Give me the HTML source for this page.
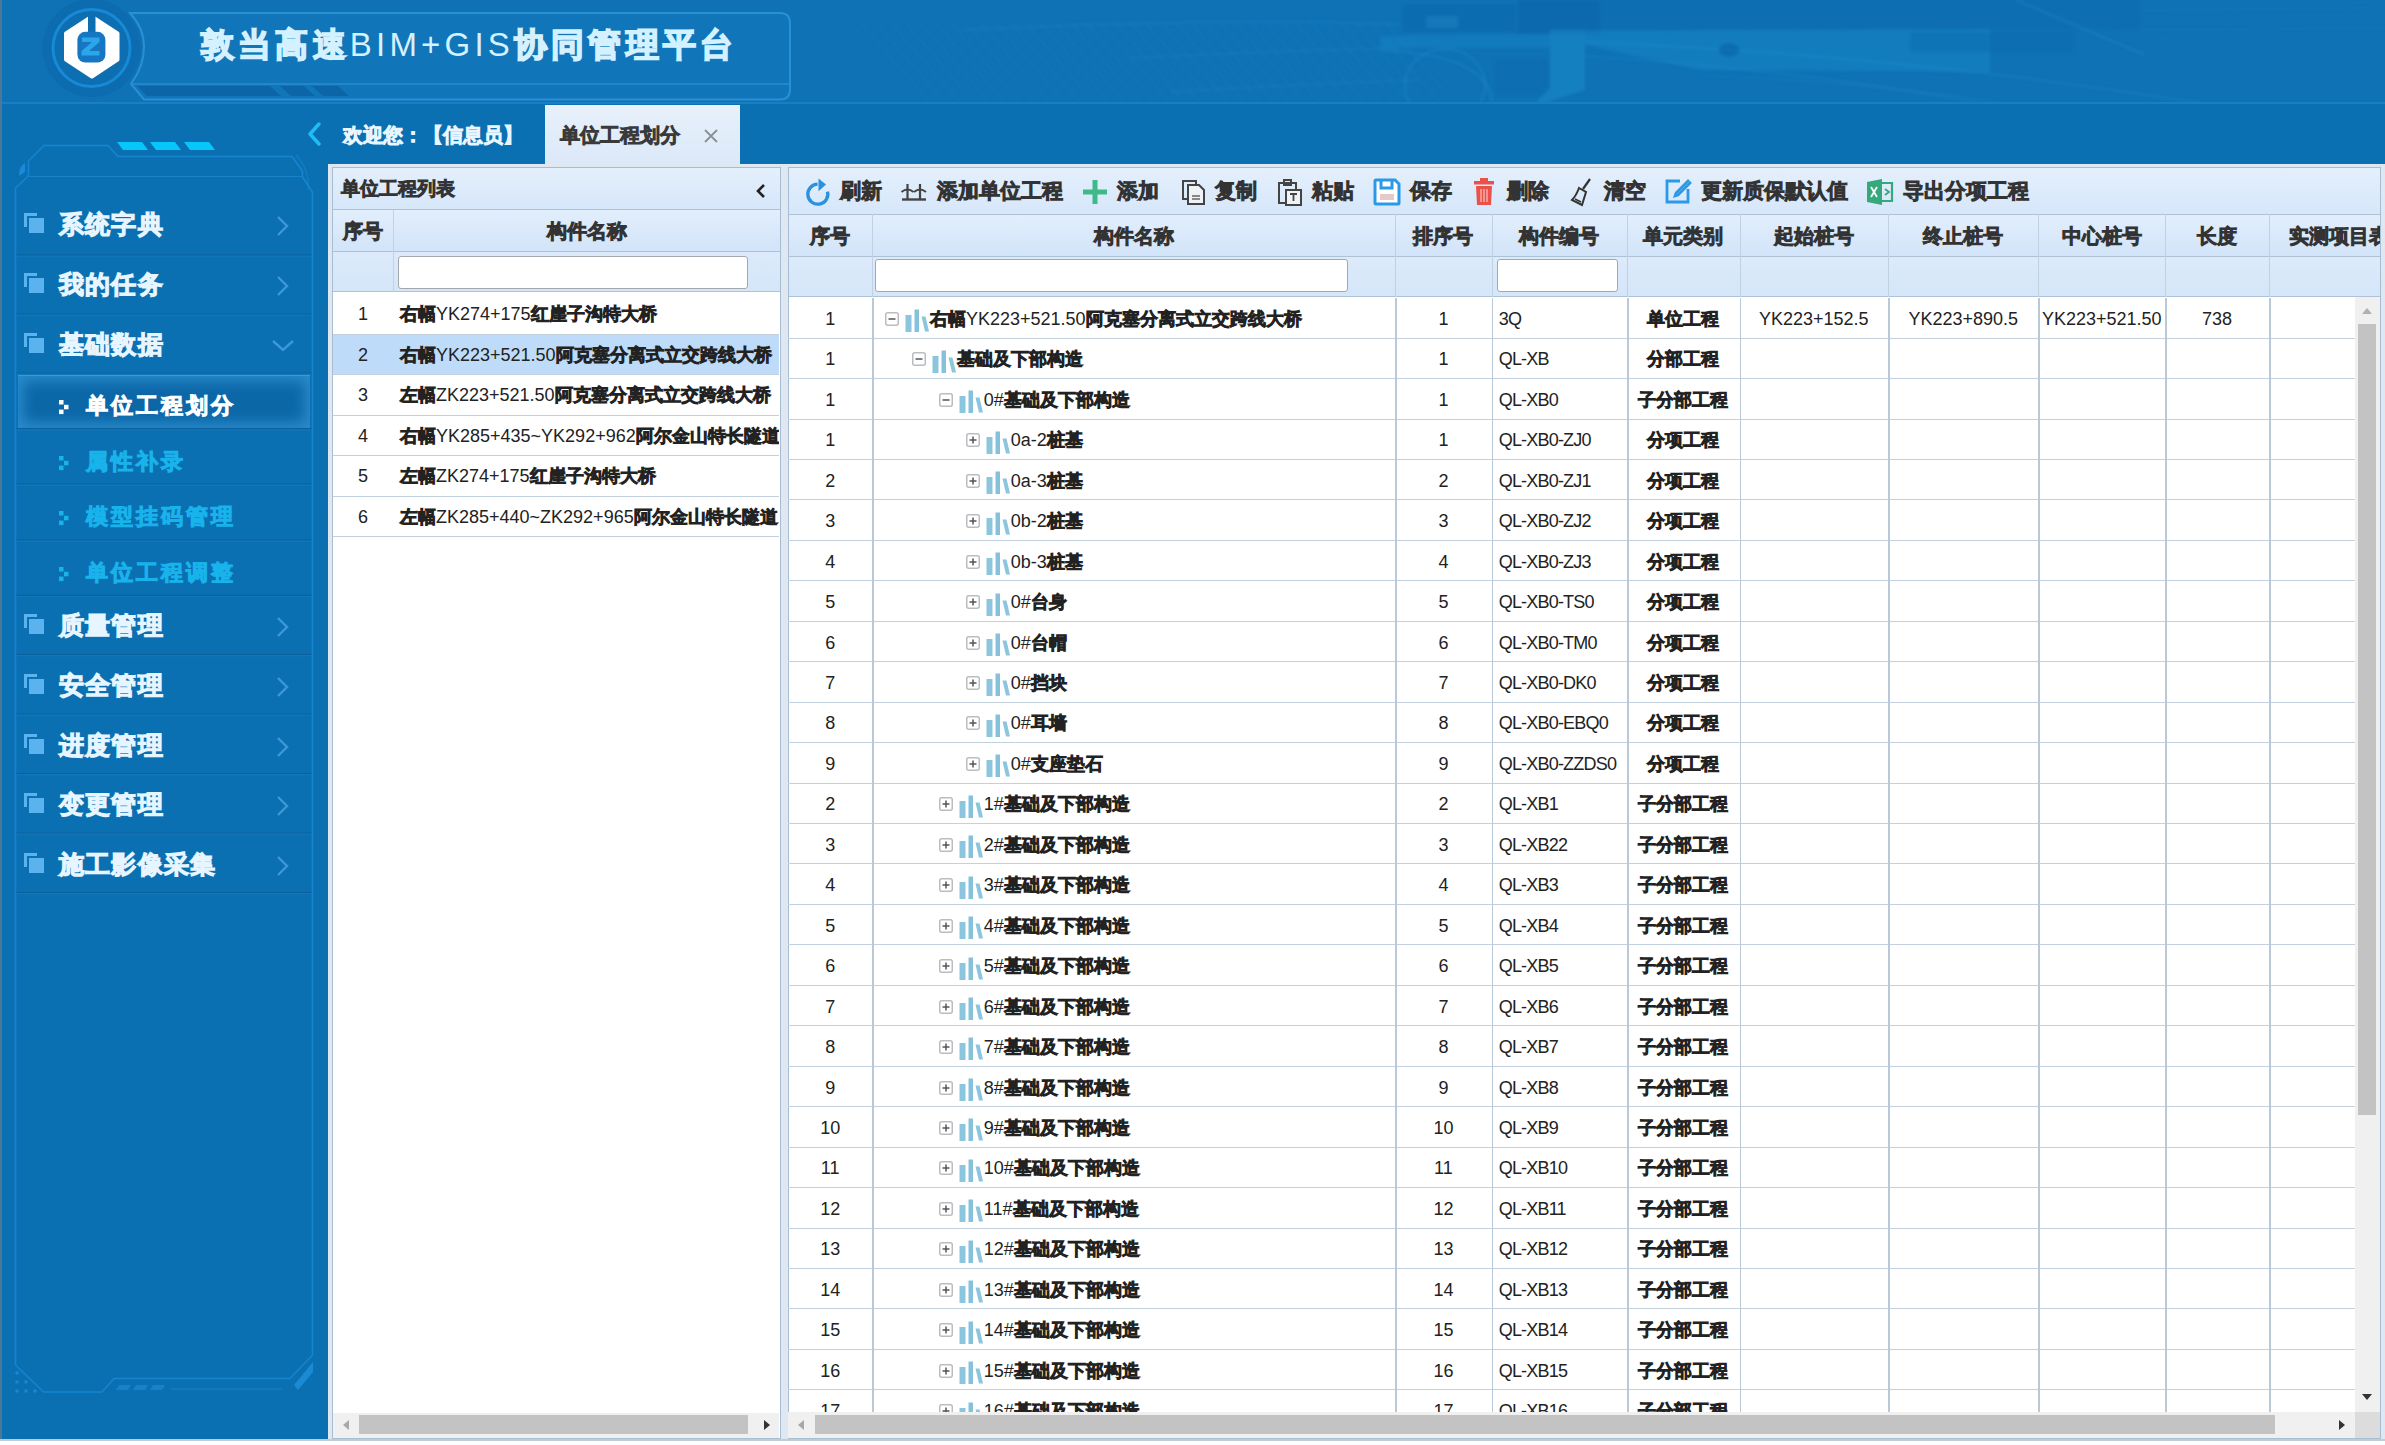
<!DOCTYPE html><html><head><meta charset="utf-8"><title>敦当高速BIM+GIS协同管理平台</title><style>
*{margin:0;padding:0;box-sizing:border-box}
html,body{width:2385px;height:1445px;overflow:hidden;background:#ffffff;font-family:"Liberation Sans", sans-serif}
.abs{position:absolute}
.t{position:absolute;white-space:nowrap;line-height:1}
.c{-webkit-text-stroke:.08em currentColor}
</style></head><body>
<div class="abs" style="left:0;top:0;width:2385px;height:1439px;background:#0b70b2"></div>
<div class="abs" style="left:0;top:0;width:2385px;height:103px;background:#0e72b5;overflow:hidden">
<svg class="abs" style="left:0;top:0;filter:blur(1.6px)" width="2385" height="103" viewBox="0 0 2385 103"><path d="M860 22 L930 103" stroke="#2c98d4" stroke-width="1.3" opacity="0.16"/><path d="M875 22 L945 103" stroke="#2c98d4" stroke-width="1.3" opacity="0.16"/><path d="M890 22 L960 103" stroke="#2c98d4" stroke-width="1.3" opacity="0.16"/><path d="M905 22 L975 103" stroke="#2c98d4" stroke-width="1.3" opacity="0.16"/><path d="M920 22 L990 103" stroke="#2c98d4" stroke-width="1.3" opacity="0.16"/><path d="M935 22 L1005 103" stroke="#2c98d4" stroke-width="1.3" opacity="0.16"/><path d="M950 22 L1020 103" stroke="#2c98d4" stroke-width="1.3" opacity="0.16"/><path d="M965 22 L1035 103" stroke="#2c98d4" stroke-width="1.3" opacity="0.16"/><path d="M980 22 L1050 103" stroke="#2c98d4" stroke-width="1.3" opacity="0.16"/><path d="M995 22 L1065 103" stroke="#2c98d4" stroke-width="1.3" opacity="0.16"/><path d="M1010 22 L1080 103" stroke="#2c98d4" stroke-width="1.3" opacity="0.16"/><path d="M1025 22 L1095 103" stroke="#2c98d4" stroke-width="1.3" opacity="0.16"/><path d="M1040 22 L1110 103" stroke="#2c98d4" stroke-width="1.3" opacity="0.16"/><path d="M1055 22 L1125 103" stroke="#2c98d4" stroke-width="1.3" opacity="0.16"/><path d="M1070 22 L1140 103" stroke="#2c98d4" stroke-width="1.3" opacity="0.16"/><path d="M1085 22 L1155 103" stroke="#2c98d4" stroke-width="1.3" opacity="0.16"/><path d="M1100 22 L1170 103" stroke="#2c98d4" stroke-width="1.3" opacity="0.16"/><path d="M1115 22 L1185 103" stroke="#2c98d4" stroke-width="1.3" opacity="0.16"/><path d="M1130 22 L1200 103" stroke="#2c98d4" stroke-width="1.3" opacity="0.16"/><path d="M1145 22 L1215 103" stroke="#2c98d4" stroke-width="1.3" opacity="0.16"/><path d="M1160 22 L1230 103" stroke="#2c98d4" stroke-width="1.3" opacity="0.16"/><path d="M1175 22 L1245 103" stroke="#2c98d4" stroke-width="1.3" opacity="0.16"/><path d="M1190 22 L1260 103" stroke="#2c98d4" stroke-width="1.3" opacity="0.16"/><path d="M1205 22 L1275 103" stroke="#2c98d4" stroke-width="1.3" opacity="0.16"/><path d="M1220 22 L1290 103" stroke="#2c98d4" stroke-width="1.3" opacity="0.16"/><path d="M1235 22 L1305 103" stroke="#2c98d4" stroke-width="1.3" opacity="0.16"/><path d="M1250 22 L1320 103" stroke="#2c98d4" stroke-width="1.3" opacity="0.16"/><path d="M1265 22 L1335 103" stroke="#2c98d4" stroke-width="1.3" opacity="0.16"/><path d="M1280 22 L1350 103" stroke="#2c98d4" stroke-width="1.3" opacity="0.16"/><path d="M1295 22 L1365 103" stroke="#2c98d4" stroke-width="1.3" opacity="0.16"/><path d="M1310 22 L1380 103" stroke="#2c98d4" stroke-width="1.3" opacity="0.16"/><path d="M1325 22 L1395 103" stroke="#2c98d4" stroke-width="1.3" opacity="0.16"/><path d="M1340 22 L1410 103" stroke="#2c98d4" stroke-width="1.3" opacity="0.16"/><path d="M1355 22 L1425 103" stroke="#2c98d4" stroke-width="1.3" opacity="0.16"/><path d="M1370 22 L1440 103" stroke="#2c98d4" stroke-width="1.3" opacity="0.16"/><path d="M1385 22 L1455 103" stroke="#2c98d4" stroke-width="1.3" opacity="0.16"/><path d="M960 30 Q1200 18 1400 24" stroke="#2a94d0" stroke-width="2" fill="none" opacity="0.22"/><path d="M1130 58 Q1300 50 1400 48" stroke="#2a94d0" stroke-width="1.5" fill="none" opacity="0.25"/><path d="M1170 92 Q1300 84 1420 80" stroke="#2a94d0" stroke-width="1.5" fill="none" opacity="0.25"/><path d="M1403 3 L1517 3 L1517 33 L1403 33 Z" fill="#0a62a6" opacity="0.35"/><path d="M1403 3 L1517 3 M1403 33 L1517 33 M1517 0 L1517 33" stroke="#2a94d0" stroke-width="1.2" opacity="0.3"/><rect x="1426" y="16" width="32" height="12" fill="#2a94d0" opacity="0.3"/><path d="M1517 0 L1600 0 L1600 34 L1517 34 Z" fill="#0a60a4" opacity="0.45"/><path d="M1600 0 L2140 0 L2140 28 L1600 32 Z" fill="#0a64a8" opacity="0.25"/><path d="M1380 36 L1550 34 L1550 48 L1380 48 Z" fill="#1a8cca" opacity="0.35"/><ellipse cx="1445" cy="85" rx="40" ry="36" fill="none" stroke="#2a98d4" stroke-width="2" opacity="0.3"/><path d="M1380 50 Q1490 55 1492 103" stroke="#2a98d4" stroke-width="2" fill="none" opacity="0.3"/><path d="M1495 60 L1548 60 L1548 95 L1495 95 Z" fill="#0a62a6" opacity="0.2"/><path d="M1550 30 L1585 30 L1585 90 L1545 103 L1535 103 L1550 88 Z" fill="#1c8ecc" opacity="0.5"/><path d="M1585 30 L1990 29 L1990 72 L1700 70 L1585 45 Z" fill="#1a8dcb" opacity="0.4"/><path d="M1910 32 L2073 32 L2073 52 L1910 52 Z" fill="#0b67aa" opacity="0.35"/><path d="M2016 0 L2145 55" stroke="#2a98d4" stroke-width="2" opacity="0.3"/><path d="M1585 42 Q1900 55 2200 103" stroke="#2a98d4" stroke-width="1.8" fill="none" opacity="0.3"/><path d="M1585 56 Q1800 70 1980 103" stroke="#2a98d4" stroke-width="1.5" fill="none" opacity="0.28"/><path d="M1700 75 Q1900 85 2000 103" stroke="#2a98d4" stroke-width="1.2" fill="none" opacity="0.25"/><ellipse cx="1729" cy="50" rx="10" ry="6.5" fill="#0a5fa2" opacity="0.55"/><path d="M2140 10 L2385 8 M2140 30 L2385 28" stroke="#2a98d4" stroke-width="1" opacity="0.2"/></svg>
</div>
<div class="abs" style="left:0;top:102px;width:2385px;height:2px;background:#1a7fc2"></div>
<div class="abs" style="left:0;top:0;width:1.5px;height:1439px;background:#4a7898"></div>
<svg class="abs" style="left:0;top:0" width="820" height="104" viewBox="0 0 820 104"><circle cx="91.5" cy="48" r="49" fill="#0a62a2" opacity="0.35"/><path d="M130 13 L780 13 Q790 13 790 23 L790 89.5 Q790 99.5 780 99.5 L144 99.5 L131 84 Q144 66 144 47 Q144 28 130 13 Z" fill="#1176b9" stroke="#2a90d4" stroke-width="2"/><path d="M131 84 L790 84" stroke="#2a8cd0" stroke-width="1.5"/><path d="M137 86 L270 86 L281 96 L147 96 Z" fill="#0c65a6"/><path d="M280 86 L304 86 L315 96 L291 96 Z" fill="#0c65a6"/><path d="M312 86 L338 86 L349 96 L323 96 Z" fill="#0c65a6"/><circle cx="91.5" cy="48" r="38.5" fill="#0d6fb1" stroke="#1789d6" stroke-width="3"/><path d="M89 18.5 L66 33.5 L66 59.5 L91.9 76.5 L117.5 59.5 L117.5 33.5 L94.5 18.5 Z" fill="#ffffff" stroke="#ffffff" stroke-width="4" stroke-linejoin="round"/><rect x="88" y="14" width="7.5" height="20" fill="#0d6fb1"/><rect x="77.4" y="31.8" width="28" height="30.8" rx="8" fill="#1676c2"/><path d="M82 37.5 L99.5 37.5 L99.5 42 L89 51 L99.5 51 L99.5 55.5 L81.5 55.5 L81.5 51 L92 42 L82 42 Z" fill="#2aa6ea"/></svg>
<div class="t" style="left:201px;top:28px;font-size:33px;letter-spacing:4.2px;color:#d4f1ff"><span class="c">敦当高速</span>BIM+GIS<span class="c">协同管理平台</span></div>
<svg class="abs" style="left:300px;top:118px" width="30" height="34" viewBox="0 0 30 34"><path d="M19 6 L10 16 L19 26" stroke="#1fbdf4" stroke-width="3.5" fill="none" stroke-linecap="round" stroke-linejoin="round"/></svg>
<div class="t" style="left:343px;top:125px;font-size:20px;color:#eaf6ff"><span class="c">欢迎您：【信息员】</span></div>
<div class="abs" style="left:545px;top:105px;width:195px;height:62px;background:linear-gradient(180deg,#e8f1fb,#dbe8f8)"></div>
<div class="t" style="left:560px;top:125px;font-size:20px;color:#3a3a3a"><span class="c">单位工程划分</span></div>
<svg class="abs" style="left:702px;top:127px" width="18" height="18" viewBox="0 0 18 18"><path d="M3 3 L15 15 M15 3 L3 15" stroke="#8a8f96" stroke-width="1.8"/></svg>
<svg class="abs" style="left:0;top:104px" width="330" height="1335" viewBox="0 104 330 1335"><path d="M15.5 188 L15.5 1365 L43.6 1392 L102 1392 L114 1378.5 L290 1378.5 L312.5 1355 L312.5 192 L302.5 177 L302.5 171 L292 156.5 L118 156.5 L108 145.5 L44 145.5 L28.5 161 L28.5 176 L15.5 188" fill="none" stroke="#1784cf" stroke-width="1.6"/><path d="M296 155 Q310 170 308 190" stroke="#1784cf" stroke-width="1.2" fill="none" opacity="0.7"/><path d="M29 176.5 L302 176.5" stroke="#1a82c6" stroke-width="1.2"/><path d="M117 142 L142 142 L148 150 L123 150 Z" fill="#06c6fa"/><path d="M150 142 L175 142 L181 150 L156 150 Z" fill="#06c6fa"/><path d="M184 142 L209 142 L215 150 L190 150 Z" fill="#06c6fa"/><path d="M19 176 Q19 166 25 163 L25 172 Z" fill="#1a8ad8"/><path d="M119 1385 L131 1385 L128 1390 L116 1390 Z" fill="#1b86cf" opacity="0.8"/><path d="M136 1385 L148 1385 L145 1390 L133 1390 Z" fill="#1b86cf" opacity="0.8"/><path d="M153 1385 L165 1385 L162 1390 L150 1390 Z" fill="#1b86cf" opacity="0.8"/><path d="M171 1389 L282 1389" stroke="#1b80c4" stroke-width="1"/><circle cx="17.0" cy="1373.0" r="1.8" fill="#1a86cf"/><circle cx="17.0" cy="1382.0" r="1.8" fill="#1a86cf"/><circle cx="26.0" cy="1382.0" r="1.8" fill="#1a86cf"/><circle cx="17.0" cy="1391.0" r="1.8" fill="#1a86cf"/><circle cx="26.0" cy="1391.0" r="1.8" fill="#1a86cf"/><circle cx="35.0" cy="1391.0" r="1.8" fill="#1a86cf"/><path d="M294 1385 L313 1362 L313 1372 L298 1390 Z" fill="#1f90dc" opacity="0.8"/><path d="M16.5 255.0 L311.5 255.0" stroke="#0a609c" stroke-width="1.2"/><path d="M16.5 256.2 L311.5 256.2" stroke="#1579bb" stroke-width="1"/><path d="M16.5 314.0 L311.5 314.0" stroke="#0a609c" stroke-width="1.2"/><path d="M16.5 315.2 L311.5 315.2" stroke="#1579bb" stroke-width="1"/><path d="M16.5 373.0 L311.5 373.0" stroke="#0a609c" stroke-width="1.2"/><path d="M16.5 374.2 L311.5 374.2" stroke="#1579bb" stroke-width="1"/><path d="M16.5 428.7 L311.5 428.7" stroke="#0a609c" stroke-width="1.2"/><path d="M16.5 429.9 L311.5 429.9" stroke="#1579bb" stroke-width="1"/><path d="M16.5 484.0 L311.5 484.0" stroke="#0a609c" stroke-width="1.2"/><path d="M16.5 485.2 L311.5 485.2" stroke="#1579bb" stroke-width="1"/><path d="M16.5 540.0 L311.5 540.0" stroke="#0a609c" stroke-width="1.2"/><path d="M16.5 541.2 L311.5 541.2" stroke="#1579bb" stroke-width="1"/><path d="M16.5 595.4 L311.5 595.4" stroke="#0a609c" stroke-width="1.2"/><path d="M16.5 596.6 L311.5 596.6" stroke="#1579bb" stroke-width="1"/><path d="M16.5 654.5 L311.5 654.5" stroke="#0a609c" stroke-width="1.2"/><path d="M16.5 655.7 L311.5 655.7" stroke="#1579bb" stroke-width="1"/><path d="M16.5 714.0 L311.5 714.0" stroke="#0a609c" stroke-width="1.2"/><path d="M16.5 715.2 L311.5 715.2" stroke="#1579bb" stroke-width="1"/><path d="M16.5 773.5 L311.5 773.5" stroke="#0a609c" stroke-width="1.2"/><path d="M16.5 774.7 L311.5 774.7" stroke="#1579bb" stroke-width="1"/><path d="M16.5 833.0 L311.5 833.0" stroke="#0a609c" stroke-width="1.2"/><path d="M16.5 834.2 L311.5 834.2" stroke="#1579bb" stroke-width="1"/><path d="M16.5 892.5 L311.5 892.5" stroke="#0a609c" stroke-width="1.2"/><path d="M16.5 893.7 L311.5 893.7" stroke="#1579bb" stroke-width="1"/></svg>
<div class="abs" style="left:18px;top:375px;width:292px;height:53px;background:#0c67a7;box-shadow:inset 0 0 14px 5px #2a8ccc;border-top:1px solid #3b9ad6"></div>
<svg class="abs" style="left:22px;top:211px" width="26" height="24" viewBox="0 0 26 24"><path d="M2 2 L15 2 L15 5 L5 5 L5 16 L2 16 Z" fill="#5ab3ee"/><rect x="7" y="7" width="15" height="15" fill="#5ab3ee"/></svg>
<div class="t" style="left:59px;top:212px;font-size:25px;letter-spacing:1.2px;color:#e6f5ff"><span class="c">系统字典</span></div>
<svg class="abs" style="left:272px;top:213px" width="22" height="26" viewBox="0 0 22 26"><path d="M6 4 L15 13 L6 22" stroke="#3c98d6" stroke-width="2.4" fill="none"/></svg>
<svg class="abs" style="left:22px;top:271px" width="26" height="24" viewBox="0 0 26 24"><path d="M2 2 L15 2 L15 5 L5 5 L5 16 L2 16 Z" fill="#5ab3ee"/><rect x="7" y="7" width="15" height="15" fill="#5ab3ee"/></svg>
<div class="t" style="left:59px;top:272px;font-size:25px;letter-spacing:1.2px;color:#e6f5ff"><span class="c">我的任务</span></div>
<svg class="abs" style="left:272px;top:273px" width="22" height="26" viewBox="0 0 22 26"><path d="M6 4 L15 13 L6 22" stroke="#3c98d6" stroke-width="2.4" fill="none"/></svg>
<svg class="abs" style="left:22px;top:331px" width="26" height="24" viewBox="0 0 26 24"><path d="M2 2 L15 2 L15 5 L5 5 L5 16 L2 16 Z" fill="#5ab3ee"/><rect x="7" y="7" width="15" height="15" fill="#5ab3ee"/></svg>
<div class="t" style="left:59px;top:332px;font-size:25px;letter-spacing:1.2px;color:#e6f5ff"><span class="c">基础数据</span></div>
<svg class="abs" style="left:269px;top:336px" width="28" height="20" viewBox="0 0 28 20"><path d="M4 5 L14 14 L24 5" stroke="#3c98d6" stroke-width="2.4" fill="none"/></svg>
<svg class="abs" style="left:22px;top:612px" width="26" height="24" viewBox="0 0 26 24"><path d="M2 2 L15 2 L15 5 L5 5 L5 16 L2 16 Z" fill="#5ab3ee"/><rect x="7" y="7" width="15" height="15" fill="#5ab3ee"/></svg>
<div class="t" style="left:59px;top:613px;font-size:25px;letter-spacing:1.2px;color:#e6f5ff"><span class="c">质量管理</span></div>
<svg class="abs" style="left:272px;top:614px" width="22" height="26" viewBox="0 0 22 26"><path d="M6 4 L15 13 L6 22" stroke="#3c98d6" stroke-width="2.4" fill="none"/></svg>
<svg class="abs" style="left:22px;top:672px" width="26" height="24" viewBox="0 0 26 24"><path d="M2 2 L15 2 L15 5 L5 5 L5 16 L2 16 Z" fill="#5ab3ee"/><rect x="7" y="7" width="15" height="15" fill="#5ab3ee"/></svg>
<div class="t" style="left:59px;top:673px;font-size:25px;letter-spacing:1.2px;color:#e6f5ff"><span class="c">安全管理</span></div>
<svg class="abs" style="left:272px;top:674px" width="22" height="26" viewBox="0 0 22 26"><path d="M6 4 L15 13 L6 22" stroke="#3c98d6" stroke-width="2.4" fill="none"/></svg>
<svg class="abs" style="left:22px;top:732px" width="26" height="24" viewBox="0 0 26 24"><path d="M2 2 L15 2 L15 5 L5 5 L5 16 L2 16 Z" fill="#5ab3ee"/><rect x="7" y="7" width="15" height="15" fill="#5ab3ee"/></svg>
<div class="t" style="left:59px;top:733px;font-size:25px;letter-spacing:1.2px;color:#e6f5ff"><span class="c">进度管理</span></div>
<svg class="abs" style="left:272px;top:734px" width="22" height="26" viewBox="0 0 22 26"><path d="M6 4 L15 13 L6 22" stroke="#3c98d6" stroke-width="2.4" fill="none"/></svg>
<svg class="abs" style="left:22px;top:791px" width="26" height="24" viewBox="0 0 26 24"><path d="M2 2 L15 2 L15 5 L5 5 L5 16 L2 16 Z" fill="#5ab3ee"/><rect x="7" y="7" width="15" height="15" fill="#5ab3ee"/></svg>
<div class="t" style="left:59px;top:792px;font-size:25px;letter-spacing:1.2px;color:#e6f5ff"><span class="c">变更管理</span></div>
<svg class="abs" style="left:272px;top:793px" width="22" height="26" viewBox="0 0 22 26"><path d="M6 4 L15 13 L6 22" stroke="#3c98d6" stroke-width="2.4" fill="none"/></svg>
<svg class="abs" style="left:22px;top:851px" width="26" height="24" viewBox="0 0 26 24"><path d="M2 2 L15 2 L15 5 L5 5 L5 16 L2 16 Z" fill="#5ab3ee"/><rect x="7" y="7" width="15" height="15" fill="#5ab3ee"/></svg>
<div class="t" style="left:59px;top:852px;font-size:25px;letter-spacing:1.2px;color:#e6f5ff"><span class="c">施工影像采集</span></div>
<svg class="abs" style="left:272px;top:853px" width="22" height="26" viewBox="0 0 22 26"><path d="M6 4 L15 13 L6 22" stroke="#3c98d6" stroke-width="2.4" fill="none"/></svg>
<svg class="abs" style="left:56px;top:397.5px" width="16" height="18" viewBox="0 0 16 18"><rect x="3" y="2" width="4.5" height="4.5" fill="#ffffff"/><rect x="8" y="6.8" width="4.5" height="4.5" fill="#ffffff"/><rect x="3" y="11.6" width="4.5" height="4.5" fill="#ffffff"/></svg>
<div class="t" style="left:86px;top:395px;font-size:22px;letter-spacing:3px;color:#ffffff"><span class="c">单位工程划分</span></div>
<svg class="abs" style="left:56px;top:453.5px" width="16" height="18" viewBox="0 0 16 18"><rect x="3" y="2" width="4.5" height="4.5" fill="#19b3ec"/><rect x="8" y="6.8" width="4.5" height="4.5" fill="#19b3ec"/><rect x="3" y="11.6" width="4.5" height="4.5" fill="#19b3ec"/></svg>
<div class="t" style="left:86px;top:451px;font-size:22px;letter-spacing:3px;color:#19b3ec"><span class="c">属性补录</span></div>
<svg class="abs" style="left:56px;top:508.5px" width="16" height="18" viewBox="0 0 16 18"><rect x="3" y="2" width="4.5" height="4.5" fill="#19b3ec"/><rect x="8" y="6.8" width="4.5" height="4.5" fill="#19b3ec"/><rect x="3" y="11.6" width="4.5" height="4.5" fill="#19b3ec"/></svg>
<div class="t" style="left:86px;top:506px;font-size:22px;letter-spacing:3px;color:#19b3ec"><span class="c">模型挂码管理</span></div>
<svg class="abs" style="left:56px;top:564.5px" width="16" height="18" viewBox="0 0 16 18"><rect x="3" y="2" width="4.5" height="4.5" fill="#19b3ec"/><rect x="8" y="6.8" width="4.5" height="4.5" fill="#19b3ec"/><rect x="3" y="11.6" width="4.5" height="4.5" fill="#19b3ec"/></svg>
<div class="t" style="left:86px;top:562px;font-size:22px;letter-spacing:3px;color:#19b3ec"><span class="c">单位工程调整</span></div>
<div class="abs" style="left:328px;top:164px;width:2057px;height:1275px;background:#dfe8f1"></div>
<div class="abs" style="left:0;top:1439px;width:2385px;height:2px;background:#c3ccd3"></div>
<div class="abs" style="left:332px;top:167px;width:449px;height:1272px;background:#ffffff;border:1px solid #a7bdd3"></div>
<div class="abs" style="left:333px;top:168px;width:447px;height:42px;background:linear-gradient(180deg,#e4effc,#d6e7fa);border-bottom:1.5px solid #afc2d5"></div>
<div class="t" style="left:341px;top:179px;font-size:19px;color:#333"><span class="c">单位工程列表</span></div>
<svg class="abs" style="left:752px;top:181px" width="18" height="20" viewBox="0 0 18 20"><path d="M12 4 L6 10 L12 16" stroke="#222" stroke-width="2.6" fill="none"/></svg>
<div class="abs" style="left:333px;top:210px;width:447px;height:42px;background:linear-gradient(180deg,#e2eefc,#d2e4f9);border-bottom:1.5px solid #afc2d5"></div>
<div class="abs" style="left:333px;top:252px;width:447px;height:40.3px;background:linear-gradient(180deg,#dceafa,#d5e6f9);border-bottom:1.5px solid #afc2d5"></div>
<div class="abs" style="left:393px;top:210px;width:1px;height:82px;background:#c0d2e4"></div>
<div class="t" style="left:333px;width:60px;text-align:center;top:221px;font-size:20px;color:#333"><span class="c">序号</span></div>
<div class="t" style="left:394px;width:386px;text-align:center;top:221px;font-size:20px;color:#333"><span class="c">构件名称</span></div>
<div class="abs" style="left:398px;top:255.5px;width:350px;height:33px;background:#fff;border:1.5px solid #a3a8ad;border-radius:3px"></div>
<div class="abs" style="left:333px;top:294.30px;width:446px;height:40.45px;background:#ffffff;border-bottom:1.6px solid #c3d0dd;overflow:hidden">
<div class="t" style="left:0;width:60px;text-align:center;top:11px;font-size:18px;color:#222">1</div>
<div class="abs" style="left:60px;top:0;width:1.5px;height:100%%;background:#bccbda"></div>
<div class="t" style="left:67px;top:11px;font-size:18px;color:#222"><span class="c">右幅</span>YK274+175<span class="c">红崖子沟特大桥</span></div>
</div>
<div class="abs" style="left:333px;top:334.75px;width:446px;height:40.45px;background:#bedcf9;border-bottom:1.6px solid #c3d0dd;overflow:hidden">
<div class="t" style="left:0;width:60px;text-align:center;top:11px;font-size:18px;color:#222">2</div>
<div class="abs" style="left:60px;top:0;width:1.5px;height:100%%;background:#bccbda"></div>
<div class="t" style="left:67px;top:11px;font-size:18px;color:#222"><span class="c">右幅</span>YK223+521.50<span class="c">阿克塞分离式立交跨线大桥</span></div>
</div>
<div class="abs" style="left:333px;top:375.20px;width:446px;height:40.45px;background:#ffffff;border-bottom:1.6px solid #c3d0dd;overflow:hidden">
<div class="t" style="left:0;width:60px;text-align:center;top:11px;font-size:18px;color:#222">3</div>
<div class="abs" style="left:60px;top:0;width:1.5px;height:100%%;background:#bccbda"></div>
<div class="t" style="left:67px;top:11px;font-size:18px;color:#222"><span class="c">左幅</span>ZK223+521.50<span class="c">阿克塞分离式立交跨线大桥</span></div>
</div>
<div class="abs" style="left:333px;top:415.65px;width:446px;height:40.45px;background:#ffffff;border-bottom:1.6px solid #c3d0dd;overflow:hidden">
<div class="t" style="left:0;width:60px;text-align:center;top:11px;font-size:18px;color:#222">4</div>
<div class="abs" style="left:60px;top:0;width:1.5px;height:100%%;background:#bccbda"></div>
<div class="t" style="left:67px;top:11px;font-size:18px;color:#222"><span class="c">右幅</span>YK285+435~YK292+962<span class="c">阿尔金山特长隧道</span></div>
</div>
<div class="abs" style="left:333px;top:456.10px;width:446px;height:40.45px;background:#ffffff;border-bottom:1.6px solid #c3d0dd;overflow:hidden">
<div class="t" style="left:0;width:60px;text-align:center;top:11px;font-size:18px;color:#222">5</div>
<div class="abs" style="left:60px;top:0;width:1.5px;height:100%%;background:#bccbda"></div>
<div class="t" style="left:67px;top:11px;font-size:18px;color:#222"><span class="c">左幅</span>ZK274+175<span class="c">红崖子沟特大桥</span></div>
</div>
<div class="abs" style="left:333px;top:496.55px;width:446px;height:40.45px;background:#ffffff;border-bottom:1.6px solid #c3d0dd;overflow:hidden">
<div class="t" style="left:0;width:60px;text-align:center;top:11px;font-size:18px;color:#222">6</div>
<div class="abs" style="left:60px;top:0;width:1.5px;height:100%%;background:#bccbda"></div>
<div class="t" style="left:67px;top:11px;font-size:18px;color:#222"><span class="c">左幅</span>ZK285+440~ZK292+965<span class="c">阿尔金山特长隧道</span></div>
</div>
<div class="abs" style="left:333px;top:1413px;width:446px;height:25px;background:#f0f0f0"></div>
<div class="abs" style="left:359px;top:1415px;width:389px;height:19px;background:#c3c3c3"></div>
<svg class="abs" style="left:339px;top:1417px" width="14" height="16" viewBox="0 0 14 16"><path d="M10 3 L4 8 L10 13 Z" fill="#a8a8a8"/></svg>
<svg class="abs" style="left:760px;top:1417px" width="14" height="16" viewBox="0 0 14 16"><path d="M4 3 L10 8 L4 13 Z" fill="#333"/></svg>
<div class="abs" style="left:788px;top:167px;width:1593px;height:1272px;background:#ffffff;border:1px solid #a7bdd3"></div>
<div class="abs" style="left:789px;top:168px;width:1591px;height:47px;background:linear-gradient(180deg,#e4effc,#d6e7fa);border-bottom:1.5px solid #afc2d5"></div>
<svg class="abs" style="left:804px;top:178px" width="30" height="30" viewBox="0 0 30 30"><path d="M13.6 6.2 A10 10 0 1 0 23.5 13.6" stroke="#2a90e0" stroke-width="3.3" fill="none"/><path d="M14.5 0.5 L22 6.6 L14.5 13.2 Z" fill="#2a90e0"/></svg>
<svg class="abs" style="left:900px;top:182px" width="30" height="22" viewBox="0 0 30 22"><path d="M2 17.5 L26 17.5" stroke="#444" stroke-width="2.4"/><path d="M7.5 2 L7.5 17 M20 2 L20 17" stroke="#444" stroke-width="2.2"/><path d="M1.5 10 Q7.5 5 13.5 10 M14 10 Q20 5 26 10" stroke="#444" stroke-width="2" fill="none"/></svg>
<svg class="abs" style="left:1081px;top:178px" width="28" height="28" viewBox="0 0 28 28"><path d="M14 2 L14 26 M2 14 L26 14" stroke="#3fb98a" stroke-width="5" fill="none"/></svg>
<svg class="abs" style="left:1180px;top:178px" width="28" height="28" viewBox="0 0 28 28"><path d="M3 3 L16 3 L16 21 L3 21 Z" stroke="#444" stroke-width="2" fill="none"/><path d="M8 7 L19 7 L24 12 L24 26 L8 26 Z" stroke="#444" stroke-width="2" fill="#eef3f8"/><path d="M12 18 L20 18 M12 21 L20 21" stroke="#666" stroke-width="1.5"/></svg>
<svg class="abs" style="left:1276px;top:177px" width="28" height="30" viewBox="0 0 28 30"><path d="M3 6 L20 6 L20 26 L3 26 Z" stroke="#444" stroke-width="2" fill="none"/><path d="M8 3 L15 3 L15 8 L8 8 Z" stroke="#444" stroke-width="2" fill="none"/><path d="M10 13 L25 13 L25 28 L10 28 Z" stroke="#444" stroke-width="2" fill="#eef3f8"/><path d="M14 17 L21 17 M17.5 17 L17.5 24" stroke="#444" stroke-width="1.8"/></svg>
<svg class="abs" style="left:1373px;top:178px" width="28" height="28" viewBox="0 0 28 28"><path d="M2 3 Q2 2 3 2 L22 2 L26 6 L26 25 Q26 26 25 26 L3 26 Q2 26 2 25 Z" stroke="#2a9ae8" stroke-width="3" fill="#fff"/><path d="M8 3 L8 10 L19 10 L19 3" stroke="#2a9ae8" stroke-width="3" fill="none"/><rect x="7" y="16" width="14" height="6" fill="#e7c9c9"/></svg>
<svg class="abs" style="left:1472px;top:177px" width="24" height="30" viewBox="0 0 24 30"><rect x="8" y="1" width="8" height="3" fill="#e9524a"/><rect x="2" y="4" width="20" height="3.5" fill="#e9524a"/><path d="M4 9 L20 9 L19 28 L5 28 Z" fill="#e9524a"/><path d="M9 12 L9 25 M12 12 L12 25 M15 12 L15 25" stroke="#f7b3ae" stroke-width="1.4"/></svg>
<svg class="abs" style="left:1569px;top:177px" width="24" height="30" viewBox="0 0 24 30"><path d="M21 2 L14 12" stroke="#333" stroke-width="2.2"/><path d="M10 11 L17 15 L13 28 L3 23 Q7 19 10 11 Z" stroke="#333" stroke-width="2" fill="none"/><path d="M6 22 L12 25" stroke="#333" stroke-width="1.5"/></svg>
<svg class="abs" style="left:1664px;top:177px" width="28" height="28" viewBox="0 0 28 28"><path d="M16 4 L3 4 L3 25 L24 25 L24 12" stroke="#2a9ae8" stroke-width="2.8" fill="none"/><path d="M25 3 L12 16 L11 19 L14 18 L27 5" stroke="#2a9ae8" stroke-width="2.6" fill="none"/></svg>
<svg class="abs" style="left:1866px;top:177px" width="28" height="30" viewBox="0 0 28 30"><path d="M1 5 L16 2 L16 28 L1 25 Z" fill="#35a97b"/><path d="M5 10 L11 20 M11 10 L5 20" stroke="#fff" stroke-width="1.8"/><path d="M16 6 L26 6 L26 24 L16 24" stroke="#35a97b" stroke-width="2.2" fill="none"/><path d="M19 12 L23 15 L19 18" stroke="#35a97b" stroke-width="1.8" fill="none"/></svg>
<div class="t" style="left:840px;top:181px;font-size:20.5px;color:#333"><span class="c">刷新</span></div>
<div class="t" style="left:937px;top:181px;font-size:20.5px;color:#333"><span class="c">添加单位工程</span></div>
<div class="t" style="left:1117px;top:181px;font-size:20.5px;color:#333"><span class="c">添加</span></div>
<div class="t" style="left:1215px;top:181px;font-size:20.5px;color:#333"><span class="c">复制</span></div>
<div class="t" style="left:1312px;top:181px;font-size:20.5px;color:#333"><span class="c">粘贴</span></div>
<div class="t" style="left:1410px;top:181px;font-size:20.5px;color:#333"><span class="c">保存</span></div>
<div class="t" style="left:1507px;top:181px;font-size:20.5px;color:#333"><span class="c">删除</span></div>
<div class="t" style="left:1604px;top:181px;font-size:20.5px;color:#333"><span class="c">清空</span></div>
<div class="t" style="left:1701px;top:181px;font-size:20.5px;color:#333"><span class="c">更新质保默认值</span></div>
<div class="t" style="left:1903px;top:181px;font-size:20.5px;color:#333"><span class="c">导出分项工程</span></div>
<div class="abs" style="left:789px;top:215px;width:1591px;height:41.5px;background:linear-gradient(180deg,#e2eefc,#d2e4f9);border-bottom:1.5px solid #afc2d5"></div>
<div class="abs" style="left:789px;top:256.5px;width:1591px;height:40.7px;background:linear-gradient(180deg,#dceafa,#d5e6f9);border-bottom:1.5px solid #afc2d5"></div>
<div class="abs" style="left:872.4px;top:214px;width:1px;height:82.7px;background:#bfd1e3"></div>
<div class="abs" style="left:1395.1px;top:214px;width:1px;height:82.7px;background:#bfd1e3"></div>
<div class="abs" style="left:1491.7px;top:214px;width:1px;height:82.7px;background:#bfd1e3"></div>
<div class="abs" style="left:1627.0px;top:214px;width:1px;height:82.7px;background:#bfd1e3"></div>
<div class="abs" style="left:1739.7px;top:214px;width:1px;height:82.7px;background:#bfd1e3"></div>
<div class="abs" style="left:1888.0px;top:214px;width:1px;height:82.7px;background:#bfd1e3"></div>
<div class="abs" style="left:2038.4px;top:214px;width:1px;height:82.7px;background:#bfd1e3"></div>
<div class="abs" style="left:2165.2px;top:214px;width:1px;height:82.7px;background:#bfd1e3"></div>
<div class="abs" style="left:2269.0px;top:214px;width:1px;height:82.7px;background:#bfd1e3"></div>
<div class="abs" style="left:788px;top:214px;width:1592px;height:83px;overflow:hidden">
<div class="t" style="left:0.0px;width:84.4px;text-align:center;top:12px;font-size:20px;color:#333"><span class="c">序号</span></div>
<div class="t" style="left:84.4px;width:522.7px;text-align:center;top:12px;font-size:20px;color:#333"><span class="c">构件名称</span></div>
<div class="t" style="left:607.1px;width:96.6px;text-align:center;top:12px;font-size:20px;color:#333"><span class="c">排序号</span></div>
<div class="t" style="left:703.7px;width:135.3px;text-align:center;top:12px;font-size:20px;color:#333"><span class="c">构件编号</span></div>
<div class="t" style="left:839.0px;width:112.7px;text-align:center;top:12px;font-size:20px;color:#333"><span class="c">单元类别</span></div>
<div class="t" style="left:951.7px;width:148.3px;text-align:center;top:12px;font-size:20px;color:#333"><span class="c">起始桩号</span></div>
<div class="t" style="left:1100.0px;width:150.4px;text-align:center;top:12px;font-size:20px;color:#333"><span class="c">终止桩号</span></div>
<div class="t" style="left:1250.4px;width:126.8px;text-align:center;top:12px;font-size:20px;color:#333"><span class="c">中心桩号</span></div>
<div class="t" style="left:1377.2px;width:103.8px;text-align:center;top:12px;font-size:20px;color:#333"><span class="c">长度</span></div>
<div class="t" style="left:1501.0px;top:12px;font-size:20px;color:#333"><span class="c">实测项目表</span></div>
</div>
<div class="abs" style="left:875px;top:259.3px;width:473px;height:33.2px;background:#fff;border:1.5px solid #a3a8ad;border-radius:3px"></div>
<div class="abs" style="left:1496.7px;top:259.3px;width:121.5px;height:33.2px;background:#fff;border:1.5px solid #a3a8ad;border-radius:3px"></div>
<div class="abs" style="left:788px;top:298.2px;width:1567px;height:1114.2px;overflow:hidden">
<div class="abs" style="left:0;top:0.00px;width:1567px;height:40.45px;border-bottom:1.6px solid #c3d0dd"></div>
<div class="t" style="left:0;width:84.4px;text-align:center;top:11.80px;font-size:18px;color:#222">1</div>
<svg class="abs" style="left:97.0px;top:13.80px" width="14" height="14" viewBox="0 0 14 14"><rect x="0.75" y="0.75" width="12.5" height="12.5" rx="2" fill="#fff" stroke="#b9bdc1" stroke-width="1.5"/><path d="M3.5 7 L10.5 7" stroke="#555" stroke-width="1.5"/></svg>
<svg class="abs" style="left:117.0px;top:11.20px" width="25" height="24" viewBox="0 0 25 24"><rect x="0.5" y="6" width="6" height="17" fill="#8cc5de"/><rect x="9.5" y="0.5" width="4.5" height="22.5" fill="#86c1dc"/><path d="M16.5 7.5 L20.5 7.5 L24 22.5 L20 22.5 Z" fill="#8cc5de"/></svg>
<div class="t" style="left:142.0px;top:11.80px;font-size:18px;color:#222"><span class="c">右幅</span>YK223+521.50<span class="c">阿克塞分离式立交跨线大桥</span></div>
<div class="t" style="left:607.1px;width:96.6px;text-align:center;top:11.80px;font-size:18px;color:#222">1</div>
<div class="t" style="left:710.7px;top:11.80px;font-size:18px;letter-spacing:-0.8px;color:#222">3Q</div>
<div class="t" style="left:839.0px;width:112.7px;text-align:center;top:11.80px;font-size:18px;color:#222"><span class="c">单位工程</span></div>
<div class="t" style="left:951.7px;width:148.3px;text-align:center;top:11.80px;font-size:18px;color:#222">YK223+152.5</div>
<div class="t" style="left:1100.0px;width:150.4px;text-align:center;top:11.80px;font-size:18px;color:#222">YK223+890.5</div>
<div class="t" style="left:1250.4px;width:126.8px;text-align:center;top:11.80px;font-size:18px;color:#222">YK223+521.50</div>
<div class="t" style="left:1377.2px;width:103.8px;text-align:center;top:11.80px;font-size:18px;color:#222">738</div>
<div class="abs" style="left:0;top:40.45px;width:1567px;height:40.45px;border-bottom:1.6px solid #c3d0dd"></div>
<div class="t" style="left:0;width:84.4px;text-align:center;top:52.25px;font-size:18px;color:#222">1</div>
<svg class="abs" style="left:123.9px;top:54.25px" width="14" height="14" viewBox="0 0 14 14"><rect x="0.75" y="0.75" width="12.5" height="12.5" rx="2" fill="#fff" stroke="#b9bdc1" stroke-width="1.5"/><path d="M3.5 7 L10.5 7" stroke="#555" stroke-width="1.5"/></svg>
<svg class="abs" style="left:143.9px;top:51.65px" width="25" height="24" viewBox="0 0 25 24"><rect x="0.5" y="6" width="6" height="17" fill="#8cc5de"/><rect x="9.5" y="0.5" width="4.5" height="22.5" fill="#86c1dc"/><path d="M16.5 7.5 L20.5 7.5 L24 22.5 L20 22.5 Z" fill="#8cc5de"/></svg>
<div class="t" style="left:168.9px;top:52.25px;font-size:18px;color:#222"><span class="c">基础及下部构造</span></div>
<div class="t" style="left:607.1px;width:96.6px;text-align:center;top:52.25px;font-size:18px;color:#222">1</div>
<div class="t" style="left:710.7px;top:52.25px;font-size:18px;letter-spacing:-0.8px;color:#222">QL-XB</div>
<div class="t" style="left:839.0px;width:112.7px;text-align:center;top:52.25px;font-size:18px;color:#222"><span class="c">分部工程</span></div>
<div class="abs" style="left:0;top:80.90px;width:1567px;height:40.45px;border-bottom:1.6px solid #c3d0dd"></div>
<div class="t" style="left:0;width:84.4px;text-align:center;top:92.70px;font-size:18px;color:#222">1</div>
<svg class="abs" style="left:150.8px;top:94.70px" width="14" height="14" viewBox="0 0 14 14"><rect x="0.75" y="0.75" width="12.5" height="12.5" rx="2" fill="#fff" stroke="#b9bdc1" stroke-width="1.5"/><path d="M3.5 7 L10.5 7" stroke="#555" stroke-width="1.5"/></svg>
<svg class="abs" style="left:170.8px;top:92.10px" width="25" height="24" viewBox="0 0 25 24"><rect x="0.5" y="6" width="6" height="17" fill="#8cc5de"/><rect x="9.5" y="0.5" width="4.5" height="22.5" fill="#86c1dc"/><path d="M16.5 7.5 L20.5 7.5 L24 22.5 L20 22.5 Z" fill="#8cc5de"/></svg>
<div class="t" style="left:195.8px;top:92.70px;font-size:18px;color:#222">0#<span class="c">基础及下部构造</span></div>
<div class="t" style="left:607.1px;width:96.6px;text-align:center;top:92.70px;font-size:18px;color:#222">1</div>
<div class="t" style="left:710.7px;top:92.70px;font-size:18px;letter-spacing:-0.8px;color:#222">QL-XB0</div>
<div class="t" style="left:839.0px;width:112.7px;text-align:center;top:92.70px;font-size:18px;color:#222"><span class="c">子分部工程</span></div>
<div class="abs" style="left:0;top:121.35px;width:1567px;height:40.45px;border-bottom:1.6px solid #c3d0dd"></div>
<div class="t" style="left:0;width:84.4px;text-align:center;top:133.15px;font-size:18px;color:#222">1</div>
<svg class="abs" style="left:177.7px;top:135.15px" width="14" height="14" viewBox="0 0 14 14"><rect x="0.75" y="0.75" width="12.5" height="12.5" rx="2" fill="#fff" stroke="#b9bdc1" stroke-width="1.5"/><path d="M3.5 7 L10.5 7 M7 3.5 L7 10.5" stroke="#555" stroke-width="1.5"/></svg>
<svg class="abs" style="left:197.7px;top:132.55px" width="25" height="24" viewBox="0 0 25 24"><rect x="0.5" y="6" width="6" height="17" fill="#8cc5de"/><rect x="9.5" y="0.5" width="4.5" height="22.5" fill="#86c1dc"/><path d="M16.5 7.5 L20.5 7.5 L24 22.5 L20 22.5 Z" fill="#8cc5de"/></svg>
<div class="t" style="left:222.7px;top:133.15px;font-size:18px;color:#222">0a-2<span class="c">桩基</span></div>
<div class="t" style="left:607.1px;width:96.6px;text-align:center;top:133.15px;font-size:18px;color:#222">1</div>
<div class="t" style="left:710.7px;top:133.15px;font-size:18px;letter-spacing:-0.8px;color:#222">QL-XB0-ZJ0</div>
<div class="t" style="left:839.0px;width:112.7px;text-align:center;top:133.15px;font-size:18px;color:#222"><span class="c">分项工程</span></div>
<div class="abs" style="left:0;top:161.80px;width:1567px;height:40.45px;border-bottom:1.6px solid #c3d0dd"></div>
<div class="t" style="left:0;width:84.4px;text-align:center;top:173.60px;font-size:18px;color:#222">2</div>
<svg class="abs" style="left:177.7px;top:175.60px" width="14" height="14" viewBox="0 0 14 14"><rect x="0.75" y="0.75" width="12.5" height="12.5" rx="2" fill="#fff" stroke="#b9bdc1" stroke-width="1.5"/><path d="M3.5 7 L10.5 7 M7 3.5 L7 10.5" stroke="#555" stroke-width="1.5"/></svg>
<svg class="abs" style="left:197.7px;top:173.00px" width="25" height="24" viewBox="0 0 25 24"><rect x="0.5" y="6" width="6" height="17" fill="#8cc5de"/><rect x="9.5" y="0.5" width="4.5" height="22.5" fill="#86c1dc"/><path d="M16.5 7.5 L20.5 7.5 L24 22.5 L20 22.5 Z" fill="#8cc5de"/></svg>
<div class="t" style="left:222.7px;top:173.60px;font-size:18px;color:#222">0a-3<span class="c">桩基</span></div>
<div class="t" style="left:607.1px;width:96.6px;text-align:center;top:173.60px;font-size:18px;color:#222">2</div>
<div class="t" style="left:710.7px;top:173.60px;font-size:18px;letter-spacing:-0.8px;color:#222">QL-XB0-ZJ1</div>
<div class="t" style="left:839.0px;width:112.7px;text-align:center;top:173.60px;font-size:18px;color:#222"><span class="c">分项工程</span></div>
<div class="abs" style="left:0;top:202.25px;width:1567px;height:40.45px;border-bottom:1.6px solid #c3d0dd"></div>
<div class="t" style="left:0;width:84.4px;text-align:center;top:214.05px;font-size:18px;color:#222">3</div>
<svg class="abs" style="left:177.7px;top:216.05px" width="14" height="14" viewBox="0 0 14 14"><rect x="0.75" y="0.75" width="12.5" height="12.5" rx="2" fill="#fff" stroke="#b9bdc1" stroke-width="1.5"/><path d="M3.5 7 L10.5 7 M7 3.5 L7 10.5" stroke="#555" stroke-width="1.5"/></svg>
<svg class="abs" style="left:197.7px;top:213.45px" width="25" height="24" viewBox="0 0 25 24"><rect x="0.5" y="6" width="6" height="17" fill="#8cc5de"/><rect x="9.5" y="0.5" width="4.5" height="22.5" fill="#86c1dc"/><path d="M16.5 7.5 L20.5 7.5 L24 22.5 L20 22.5 Z" fill="#8cc5de"/></svg>
<div class="t" style="left:222.7px;top:214.05px;font-size:18px;color:#222">0b-2<span class="c">桩基</span></div>
<div class="t" style="left:607.1px;width:96.6px;text-align:center;top:214.05px;font-size:18px;color:#222">3</div>
<div class="t" style="left:710.7px;top:214.05px;font-size:18px;letter-spacing:-0.8px;color:#222">QL-XB0-ZJ2</div>
<div class="t" style="left:839.0px;width:112.7px;text-align:center;top:214.05px;font-size:18px;color:#222"><span class="c">分项工程</span></div>
<div class="abs" style="left:0;top:242.70px;width:1567px;height:40.45px;border-bottom:1.6px solid #c3d0dd"></div>
<div class="t" style="left:0;width:84.4px;text-align:center;top:254.50px;font-size:18px;color:#222">4</div>
<svg class="abs" style="left:177.7px;top:256.50px" width="14" height="14" viewBox="0 0 14 14"><rect x="0.75" y="0.75" width="12.5" height="12.5" rx="2" fill="#fff" stroke="#b9bdc1" stroke-width="1.5"/><path d="M3.5 7 L10.5 7 M7 3.5 L7 10.5" stroke="#555" stroke-width="1.5"/></svg>
<svg class="abs" style="left:197.7px;top:253.90px" width="25" height="24" viewBox="0 0 25 24"><rect x="0.5" y="6" width="6" height="17" fill="#8cc5de"/><rect x="9.5" y="0.5" width="4.5" height="22.5" fill="#86c1dc"/><path d="M16.5 7.5 L20.5 7.5 L24 22.5 L20 22.5 Z" fill="#8cc5de"/></svg>
<div class="t" style="left:222.7px;top:254.50px;font-size:18px;color:#222">0b-3<span class="c">桩基</span></div>
<div class="t" style="left:607.1px;width:96.6px;text-align:center;top:254.50px;font-size:18px;color:#222">4</div>
<div class="t" style="left:710.7px;top:254.50px;font-size:18px;letter-spacing:-0.8px;color:#222">QL-XB0-ZJ3</div>
<div class="t" style="left:839.0px;width:112.7px;text-align:center;top:254.50px;font-size:18px;color:#222"><span class="c">分项工程</span></div>
<div class="abs" style="left:0;top:283.15px;width:1567px;height:40.45px;border-bottom:1.6px solid #c3d0dd"></div>
<div class="t" style="left:0;width:84.4px;text-align:center;top:294.95px;font-size:18px;color:#222">5</div>
<svg class="abs" style="left:177.7px;top:296.95px" width="14" height="14" viewBox="0 0 14 14"><rect x="0.75" y="0.75" width="12.5" height="12.5" rx="2" fill="#fff" stroke="#b9bdc1" stroke-width="1.5"/><path d="M3.5 7 L10.5 7 M7 3.5 L7 10.5" stroke="#555" stroke-width="1.5"/></svg>
<svg class="abs" style="left:197.7px;top:294.35px" width="25" height="24" viewBox="0 0 25 24"><rect x="0.5" y="6" width="6" height="17" fill="#8cc5de"/><rect x="9.5" y="0.5" width="4.5" height="22.5" fill="#86c1dc"/><path d="M16.5 7.5 L20.5 7.5 L24 22.5 L20 22.5 Z" fill="#8cc5de"/></svg>
<div class="t" style="left:222.7px;top:294.95px;font-size:18px;color:#222">0#<span class="c">台身</span></div>
<div class="t" style="left:607.1px;width:96.6px;text-align:center;top:294.95px;font-size:18px;color:#222">5</div>
<div class="t" style="left:710.7px;top:294.95px;font-size:18px;letter-spacing:-0.8px;color:#222">QL-XB0-TS0</div>
<div class="t" style="left:839.0px;width:112.7px;text-align:center;top:294.95px;font-size:18px;color:#222"><span class="c">分项工程</span></div>
<div class="abs" style="left:0;top:323.60px;width:1567px;height:40.45px;border-bottom:1.6px solid #c3d0dd"></div>
<div class="t" style="left:0;width:84.4px;text-align:center;top:335.40px;font-size:18px;color:#222">6</div>
<svg class="abs" style="left:177.7px;top:337.40px" width="14" height="14" viewBox="0 0 14 14"><rect x="0.75" y="0.75" width="12.5" height="12.5" rx="2" fill="#fff" stroke="#b9bdc1" stroke-width="1.5"/><path d="M3.5 7 L10.5 7 M7 3.5 L7 10.5" stroke="#555" stroke-width="1.5"/></svg>
<svg class="abs" style="left:197.7px;top:334.80px" width="25" height="24" viewBox="0 0 25 24"><rect x="0.5" y="6" width="6" height="17" fill="#8cc5de"/><rect x="9.5" y="0.5" width="4.5" height="22.5" fill="#86c1dc"/><path d="M16.5 7.5 L20.5 7.5 L24 22.5 L20 22.5 Z" fill="#8cc5de"/></svg>
<div class="t" style="left:222.7px;top:335.40px;font-size:18px;color:#222">0#<span class="c">台帽</span></div>
<div class="t" style="left:607.1px;width:96.6px;text-align:center;top:335.40px;font-size:18px;color:#222">6</div>
<div class="t" style="left:710.7px;top:335.40px;font-size:18px;letter-spacing:-0.8px;color:#222">QL-XB0-TM0</div>
<div class="t" style="left:839.0px;width:112.7px;text-align:center;top:335.40px;font-size:18px;color:#222"><span class="c">分项工程</span></div>
<div class="abs" style="left:0;top:364.05px;width:1567px;height:40.45px;border-bottom:1.6px solid #c3d0dd"></div>
<div class="t" style="left:0;width:84.4px;text-align:center;top:375.85px;font-size:18px;color:#222">7</div>
<svg class="abs" style="left:177.7px;top:377.85px" width="14" height="14" viewBox="0 0 14 14"><rect x="0.75" y="0.75" width="12.5" height="12.5" rx="2" fill="#fff" stroke="#b9bdc1" stroke-width="1.5"/><path d="M3.5 7 L10.5 7 M7 3.5 L7 10.5" stroke="#555" stroke-width="1.5"/></svg>
<svg class="abs" style="left:197.7px;top:375.25px" width="25" height="24" viewBox="0 0 25 24"><rect x="0.5" y="6" width="6" height="17" fill="#8cc5de"/><rect x="9.5" y="0.5" width="4.5" height="22.5" fill="#86c1dc"/><path d="M16.5 7.5 L20.5 7.5 L24 22.5 L20 22.5 Z" fill="#8cc5de"/></svg>
<div class="t" style="left:222.7px;top:375.85px;font-size:18px;color:#222">0#<span class="c">挡块</span></div>
<div class="t" style="left:607.1px;width:96.6px;text-align:center;top:375.85px;font-size:18px;color:#222">7</div>
<div class="t" style="left:710.7px;top:375.85px;font-size:18px;letter-spacing:-0.8px;color:#222">QL-XB0-DK0</div>
<div class="t" style="left:839.0px;width:112.7px;text-align:center;top:375.85px;font-size:18px;color:#222"><span class="c">分项工程</span></div>
<div class="abs" style="left:0;top:404.50px;width:1567px;height:40.45px;border-bottom:1.6px solid #c3d0dd"></div>
<div class="t" style="left:0;width:84.4px;text-align:center;top:416.30px;font-size:18px;color:#222">8</div>
<svg class="abs" style="left:177.7px;top:418.30px" width="14" height="14" viewBox="0 0 14 14"><rect x="0.75" y="0.75" width="12.5" height="12.5" rx="2" fill="#fff" stroke="#b9bdc1" stroke-width="1.5"/><path d="M3.5 7 L10.5 7 M7 3.5 L7 10.5" stroke="#555" stroke-width="1.5"/></svg>
<svg class="abs" style="left:197.7px;top:415.70px" width="25" height="24" viewBox="0 0 25 24"><rect x="0.5" y="6" width="6" height="17" fill="#8cc5de"/><rect x="9.5" y="0.5" width="4.5" height="22.5" fill="#86c1dc"/><path d="M16.5 7.5 L20.5 7.5 L24 22.5 L20 22.5 Z" fill="#8cc5de"/></svg>
<div class="t" style="left:222.7px;top:416.30px;font-size:18px;color:#222">0#<span class="c">耳墙</span></div>
<div class="t" style="left:607.1px;width:96.6px;text-align:center;top:416.30px;font-size:18px;color:#222">8</div>
<div class="t" style="left:710.7px;top:416.30px;font-size:18px;letter-spacing:-0.8px;color:#222">QL-XB0-EBQ0</div>
<div class="t" style="left:839.0px;width:112.7px;text-align:center;top:416.30px;font-size:18px;color:#222"><span class="c">分项工程</span></div>
<div class="abs" style="left:0;top:444.95px;width:1567px;height:40.45px;border-bottom:1.6px solid #c3d0dd"></div>
<div class="t" style="left:0;width:84.4px;text-align:center;top:456.75px;font-size:18px;color:#222">9</div>
<svg class="abs" style="left:177.7px;top:458.75px" width="14" height="14" viewBox="0 0 14 14"><rect x="0.75" y="0.75" width="12.5" height="12.5" rx="2" fill="#fff" stroke="#b9bdc1" stroke-width="1.5"/><path d="M3.5 7 L10.5 7 M7 3.5 L7 10.5" stroke="#555" stroke-width="1.5"/></svg>
<svg class="abs" style="left:197.7px;top:456.15px" width="25" height="24" viewBox="0 0 25 24"><rect x="0.5" y="6" width="6" height="17" fill="#8cc5de"/><rect x="9.5" y="0.5" width="4.5" height="22.5" fill="#86c1dc"/><path d="M16.5 7.5 L20.5 7.5 L24 22.5 L20 22.5 Z" fill="#8cc5de"/></svg>
<div class="t" style="left:222.7px;top:456.75px;font-size:18px;color:#222">0#<span class="c">支座垫石</span></div>
<div class="t" style="left:607.1px;width:96.6px;text-align:center;top:456.75px;font-size:18px;color:#222">9</div>
<div class="t" style="left:710.7px;top:456.75px;font-size:18px;letter-spacing:-0.8px;color:#222">QL-XB0-ZZDS0</div>
<div class="t" style="left:839.0px;width:112.7px;text-align:center;top:456.75px;font-size:18px;color:#222"><span class="c">分项工程</span></div>
<div class="abs" style="left:0;top:485.40px;width:1567px;height:40.45px;border-bottom:1.6px solid #c3d0dd"></div>
<div class="t" style="left:0;width:84.4px;text-align:center;top:497.20px;font-size:18px;color:#222">2</div>
<svg class="abs" style="left:150.8px;top:499.20px" width="14" height="14" viewBox="0 0 14 14"><rect x="0.75" y="0.75" width="12.5" height="12.5" rx="2" fill="#fff" stroke="#b9bdc1" stroke-width="1.5"/><path d="M3.5 7 L10.5 7 M7 3.5 L7 10.5" stroke="#555" stroke-width="1.5"/></svg>
<svg class="abs" style="left:170.8px;top:496.60px" width="25" height="24" viewBox="0 0 25 24"><rect x="0.5" y="6" width="6" height="17" fill="#8cc5de"/><rect x="9.5" y="0.5" width="4.5" height="22.5" fill="#86c1dc"/><path d="M16.5 7.5 L20.5 7.5 L24 22.5 L20 22.5 Z" fill="#8cc5de"/></svg>
<div class="t" style="left:195.8px;top:497.20px;font-size:18px;color:#222">1#<span class="c">基础及下部构造</span></div>
<div class="t" style="left:607.1px;width:96.6px;text-align:center;top:497.20px;font-size:18px;color:#222">2</div>
<div class="t" style="left:710.7px;top:497.20px;font-size:18px;letter-spacing:-0.8px;color:#222">QL-XB1</div>
<div class="t" style="left:839.0px;width:112.7px;text-align:center;top:497.20px;font-size:18px;color:#222"><span class="c">子分部工程</span></div>
<div class="abs" style="left:0;top:525.85px;width:1567px;height:40.45px;border-bottom:1.6px solid #c3d0dd"></div>
<div class="t" style="left:0;width:84.4px;text-align:center;top:537.65px;font-size:18px;color:#222">3</div>
<svg class="abs" style="left:150.8px;top:539.65px" width="14" height="14" viewBox="0 0 14 14"><rect x="0.75" y="0.75" width="12.5" height="12.5" rx="2" fill="#fff" stroke="#b9bdc1" stroke-width="1.5"/><path d="M3.5 7 L10.5 7 M7 3.5 L7 10.5" stroke="#555" stroke-width="1.5"/></svg>
<svg class="abs" style="left:170.8px;top:537.05px" width="25" height="24" viewBox="0 0 25 24"><rect x="0.5" y="6" width="6" height="17" fill="#8cc5de"/><rect x="9.5" y="0.5" width="4.5" height="22.5" fill="#86c1dc"/><path d="M16.5 7.5 L20.5 7.5 L24 22.5 L20 22.5 Z" fill="#8cc5de"/></svg>
<div class="t" style="left:195.8px;top:537.65px;font-size:18px;color:#222">2#<span class="c">基础及下部构造</span></div>
<div class="t" style="left:607.1px;width:96.6px;text-align:center;top:537.65px;font-size:18px;color:#222">3</div>
<div class="t" style="left:710.7px;top:537.65px;font-size:18px;letter-spacing:-0.8px;color:#222">QL-XB22</div>
<div class="t" style="left:839.0px;width:112.7px;text-align:center;top:537.65px;font-size:18px;color:#222"><span class="c">子分部工程</span></div>
<div class="abs" style="left:0;top:566.30px;width:1567px;height:40.45px;border-bottom:1.6px solid #c3d0dd"></div>
<div class="t" style="left:0;width:84.4px;text-align:center;top:578.10px;font-size:18px;color:#222">4</div>
<svg class="abs" style="left:150.8px;top:580.10px" width="14" height="14" viewBox="0 0 14 14"><rect x="0.75" y="0.75" width="12.5" height="12.5" rx="2" fill="#fff" stroke="#b9bdc1" stroke-width="1.5"/><path d="M3.5 7 L10.5 7 M7 3.5 L7 10.5" stroke="#555" stroke-width="1.5"/></svg>
<svg class="abs" style="left:170.8px;top:577.50px" width="25" height="24" viewBox="0 0 25 24"><rect x="0.5" y="6" width="6" height="17" fill="#8cc5de"/><rect x="9.5" y="0.5" width="4.5" height="22.5" fill="#86c1dc"/><path d="M16.5 7.5 L20.5 7.5 L24 22.5 L20 22.5 Z" fill="#8cc5de"/></svg>
<div class="t" style="left:195.8px;top:578.10px;font-size:18px;color:#222">3#<span class="c">基础及下部构造</span></div>
<div class="t" style="left:607.1px;width:96.6px;text-align:center;top:578.10px;font-size:18px;color:#222">4</div>
<div class="t" style="left:710.7px;top:578.10px;font-size:18px;letter-spacing:-0.8px;color:#222">QL-XB3</div>
<div class="t" style="left:839.0px;width:112.7px;text-align:center;top:578.10px;font-size:18px;color:#222"><span class="c">子分部工程</span></div>
<div class="abs" style="left:0;top:606.75px;width:1567px;height:40.45px;border-bottom:1.6px solid #c3d0dd"></div>
<div class="t" style="left:0;width:84.4px;text-align:center;top:618.55px;font-size:18px;color:#222">5</div>
<svg class="abs" style="left:150.8px;top:620.55px" width="14" height="14" viewBox="0 0 14 14"><rect x="0.75" y="0.75" width="12.5" height="12.5" rx="2" fill="#fff" stroke="#b9bdc1" stroke-width="1.5"/><path d="M3.5 7 L10.5 7 M7 3.5 L7 10.5" stroke="#555" stroke-width="1.5"/></svg>
<svg class="abs" style="left:170.8px;top:617.95px" width="25" height="24" viewBox="0 0 25 24"><rect x="0.5" y="6" width="6" height="17" fill="#8cc5de"/><rect x="9.5" y="0.5" width="4.5" height="22.5" fill="#86c1dc"/><path d="M16.5 7.5 L20.5 7.5 L24 22.5 L20 22.5 Z" fill="#8cc5de"/></svg>
<div class="t" style="left:195.8px;top:618.55px;font-size:18px;color:#222">4#<span class="c">基础及下部构造</span></div>
<div class="t" style="left:607.1px;width:96.6px;text-align:center;top:618.55px;font-size:18px;color:#222">5</div>
<div class="t" style="left:710.7px;top:618.55px;font-size:18px;letter-spacing:-0.8px;color:#222">QL-XB4</div>
<div class="t" style="left:839.0px;width:112.7px;text-align:center;top:618.55px;font-size:18px;color:#222"><span class="c">子分部工程</span></div>
<div class="abs" style="left:0;top:647.20px;width:1567px;height:40.45px;border-bottom:1.6px solid #c3d0dd"></div>
<div class="t" style="left:0;width:84.4px;text-align:center;top:659.00px;font-size:18px;color:#222">6</div>
<svg class="abs" style="left:150.8px;top:661.00px" width="14" height="14" viewBox="0 0 14 14"><rect x="0.75" y="0.75" width="12.5" height="12.5" rx="2" fill="#fff" stroke="#b9bdc1" stroke-width="1.5"/><path d="M3.5 7 L10.5 7 M7 3.5 L7 10.5" stroke="#555" stroke-width="1.5"/></svg>
<svg class="abs" style="left:170.8px;top:658.40px" width="25" height="24" viewBox="0 0 25 24"><rect x="0.5" y="6" width="6" height="17" fill="#8cc5de"/><rect x="9.5" y="0.5" width="4.5" height="22.5" fill="#86c1dc"/><path d="M16.5 7.5 L20.5 7.5 L24 22.5 L20 22.5 Z" fill="#8cc5de"/></svg>
<div class="t" style="left:195.8px;top:659.00px;font-size:18px;color:#222">5#<span class="c">基础及下部构造</span></div>
<div class="t" style="left:607.1px;width:96.6px;text-align:center;top:659.00px;font-size:18px;color:#222">6</div>
<div class="t" style="left:710.7px;top:659.00px;font-size:18px;letter-spacing:-0.8px;color:#222">QL-XB5</div>
<div class="t" style="left:839.0px;width:112.7px;text-align:center;top:659.00px;font-size:18px;color:#222"><span class="c">子分部工程</span></div>
<div class="abs" style="left:0;top:687.65px;width:1567px;height:40.45px;border-bottom:1.6px solid #c3d0dd"></div>
<div class="t" style="left:0;width:84.4px;text-align:center;top:699.45px;font-size:18px;color:#222">7</div>
<svg class="abs" style="left:150.8px;top:701.45px" width="14" height="14" viewBox="0 0 14 14"><rect x="0.75" y="0.75" width="12.5" height="12.5" rx="2" fill="#fff" stroke="#b9bdc1" stroke-width="1.5"/><path d="M3.5 7 L10.5 7 M7 3.5 L7 10.5" stroke="#555" stroke-width="1.5"/></svg>
<svg class="abs" style="left:170.8px;top:698.85px" width="25" height="24" viewBox="0 0 25 24"><rect x="0.5" y="6" width="6" height="17" fill="#8cc5de"/><rect x="9.5" y="0.5" width="4.5" height="22.5" fill="#86c1dc"/><path d="M16.5 7.5 L20.5 7.5 L24 22.5 L20 22.5 Z" fill="#8cc5de"/></svg>
<div class="t" style="left:195.8px;top:699.45px;font-size:18px;color:#222">6#<span class="c">基础及下部构造</span></div>
<div class="t" style="left:607.1px;width:96.6px;text-align:center;top:699.45px;font-size:18px;color:#222">7</div>
<div class="t" style="left:710.7px;top:699.45px;font-size:18px;letter-spacing:-0.8px;color:#222">QL-XB6</div>
<div class="t" style="left:839.0px;width:112.7px;text-align:center;top:699.45px;font-size:18px;color:#222"><span class="c">子分部工程</span></div>
<div class="abs" style="left:0;top:728.10px;width:1567px;height:40.45px;border-bottom:1.6px solid #c3d0dd"></div>
<div class="t" style="left:0;width:84.4px;text-align:center;top:739.90px;font-size:18px;color:#222">8</div>
<svg class="abs" style="left:150.8px;top:741.90px" width="14" height="14" viewBox="0 0 14 14"><rect x="0.75" y="0.75" width="12.5" height="12.5" rx="2" fill="#fff" stroke="#b9bdc1" stroke-width="1.5"/><path d="M3.5 7 L10.5 7 M7 3.5 L7 10.5" stroke="#555" stroke-width="1.5"/></svg>
<svg class="abs" style="left:170.8px;top:739.30px" width="25" height="24" viewBox="0 0 25 24"><rect x="0.5" y="6" width="6" height="17" fill="#8cc5de"/><rect x="9.5" y="0.5" width="4.5" height="22.5" fill="#86c1dc"/><path d="M16.5 7.5 L20.5 7.5 L24 22.5 L20 22.5 Z" fill="#8cc5de"/></svg>
<div class="t" style="left:195.8px;top:739.90px;font-size:18px;color:#222">7#<span class="c">基础及下部构造</span></div>
<div class="t" style="left:607.1px;width:96.6px;text-align:center;top:739.90px;font-size:18px;color:#222">8</div>
<div class="t" style="left:710.7px;top:739.90px;font-size:18px;letter-spacing:-0.8px;color:#222">QL-XB7</div>
<div class="t" style="left:839.0px;width:112.7px;text-align:center;top:739.90px;font-size:18px;color:#222"><span class="c">子分部工程</span></div>
<div class="abs" style="left:0;top:768.55px;width:1567px;height:40.45px;border-bottom:1.6px solid #c3d0dd"></div>
<div class="t" style="left:0;width:84.4px;text-align:center;top:780.35px;font-size:18px;color:#222">9</div>
<svg class="abs" style="left:150.8px;top:782.35px" width="14" height="14" viewBox="0 0 14 14"><rect x="0.75" y="0.75" width="12.5" height="12.5" rx="2" fill="#fff" stroke="#b9bdc1" stroke-width="1.5"/><path d="M3.5 7 L10.5 7 M7 3.5 L7 10.5" stroke="#555" stroke-width="1.5"/></svg>
<svg class="abs" style="left:170.8px;top:779.75px" width="25" height="24" viewBox="0 0 25 24"><rect x="0.5" y="6" width="6" height="17" fill="#8cc5de"/><rect x="9.5" y="0.5" width="4.5" height="22.5" fill="#86c1dc"/><path d="M16.5 7.5 L20.5 7.5 L24 22.5 L20 22.5 Z" fill="#8cc5de"/></svg>
<div class="t" style="left:195.8px;top:780.35px;font-size:18px;color:#222">8#<span class="c">基础及下部构造</span></div>
<div class="t" style="left:607.1px;width:96.6px;text-align:center;top:780.35px;font-size:18px;color:#222">9</div>
<div class="t" style="left:710.7px;top:780.35px;font-size:18px;letter-spacing:-0.8px;color:#222">QL-XB8</div>
<div class="t" style="left:839.0px;width:112.7px;text-align:center;top:780.35px;font-size:18px;color:#222"><span class="c">子分部工程</span></div>
<div class="abs" style="left:0;top:809.00px;width:1567px;height:40.45px;border-bottom:1.6px solid #c3d0dd"></div>
<div class="t" style="left:0;width:84.4px;text-align:center;top:820.80px;font-size:18px;color:#222">10</div>
<svg class="abs" style="left:150.8px;top:822.80px" width="14" height="14" viewBox="0 0 14 14"><rect x="0.75" y="0.75" width="12.5" height="12.5" rx="2" fill="#fff" stroke="#b9bdc1" stroke-width="1.5"/><path d="M3.5 7 L10.5 7 M7 3.5 L7 10.5" stroke="#555" stroke-width="1.5"/></svg>
<svg class="abs" style="left:170.8px;top:820.20px" width="25" height="24" viewBox="0 0 25 24"><rect x="0.5" y="6" width="6" height="17" fill="#8cc5de"/><rect x="9.5" y="0.5" width="4.5" height="22.5" fill="#86c1dc"/><path d="M16.5 7.5 L20.5 7.5 L24 22.5 L20 22.5 Z" fill="#8cc5de"/></svg>
<div class="t" style="left:195.8px;top:820.80px;font-size:18px;color:#222">9#<span class="c">基础及下部构造</span></div>
<div class="t" style="left:607.1px;width:96.6px;text-align:center;top:820.80px;font-size:18px;color:#222">10</div>
<div class="t" style="left:710.7px;top:820.80px;font-size:18px;letter-spacing:-0.8px;color:#222">QL-XB9</div>
<div class="t" style="left:839.0px;width:112.7px;text-align:center;top:820.80px;font-size:18px;color:#222"><span class="c">子分部工程</span></div>
<div class="abs" style="left:0;top:849.45px;width:1567px;height:40.45px;border-bottom:1.6px solid #c3d0dd"></div>
<div class="t" style="left:0;width:84.4px;text-align:center;top:861.25px;font-size:18px;color:#222">11</div>
<svg class="abs" style="left:150.8px;top:863.25px" width="14" height="14" viewBox="0 0 14 14"><rect x="0.75" y="0.75" width="12.5" height="12.5" rx="2" fill="#fff" stroke="#b9bdc1" stroke-width="1.5"/><path d="M3.5 7 L10.5 7 M7 3.5 L7 10.5" stroke="#555" stroke-width="1.5"/></svg>
<svg class="abs" style="left:170.8px;top:860.65px" width="25" height="24" viewBox="0 0 25 24"><rect x="0.5" y="6" width="6" height="17" fill="#8cc5de"/><rect x="9.5" y="0.5" width="4.5" height="22.5" fill="#86c1dc"/><path d="M16.5 7.5 L20.5 7.5 L24 22.5 L20 22.5 Z" fill="#8cc5de"/></svg>
<div class="t" style="left:195.8px;top:861.25px;font-size:18px;color:#222">10#<span class="c">基础及下部构造</span></div>
<div class="t" style="left:607.1px;width:96.6px;text-align:center;top:861.25px;font-size:18px;color:#222">11</div>
<div class="t" style="left:710.7px;top:861.25px;font-size:18px;letter-spacing:-0.8px;color:#222">QL-XB10</div>
<div class="t" style="left:839.0px;width:112.7px;text-align:center;top:861.25px;font-size:18px;color:#222"><span class="c">子分部工程</span></div>
<div class="abs" style="left:0;top:889.90px;width:1567px;height:40.45px;border-bottom:1.6px solid #c3d0dd"></div>
<div class="t" style="left:0;width:84.4px;text-align:center;top:901.70px;font-size:18px;color:#222">12</div>
<svg class="abs" style="left:150.8px;top:903.70px" width="14" height="14" viewBox="0 0 14 14"><rect x="0.75" y="0.75" width="12.5" height="12.5" rx="2" fill="#fff" stroke="#b9bdc1" stroke-width="1.5"/><path d="M3.5 7 L10.5 7 M7 3.5 L7 10.5" stroke="#555" stroke-width="1.5"/></svg>
<svg class="abs" style="left:170.8px;top:901.10px" width="25" height="24" viewBox="0 0 25 24"><rect x="0.5" y="6" width="6" height="17" fill="#8cc5de"/><rect x="9.5" y="0.5" width="4.5" height="22.5" fill="#86c1dc"/><path d="M16.5 7.5 L20.5 7.5 L24 22.5 L20 22.5 Z" fill="#8cc5de"/></svg>
<div class="t" style="left:195.8px;top:901.70px;font-size:18px;color:#222">11#<span class="c">基础及下部构造</span></div>
<div class="t" style="left:607.1px;width:96.6px;text-align:center;top:901.70px;font-size:18px;color:#222">12</div>
<div class="t" style="left:710.7px;top:901.70px;font-size:18px;letter-spacing:-0.8px;color:#222">QL-XB11</div>
<div class="t" style="left:839.0px;width:112.7px;text-align:center;top:901.70px;font-size:18px;color:#222"><span class="c">子分部工程</span></div>
<div class="abs" style="left:0;top:930.35px;width:1567px;height:40.45px;border-bottom:1.6px solid #c3d0dd"></div>
<div class="t" style="left:0;width:84.4px;text-align:center;top:942.15px;font-size:18px;color:#222">13</div>
<svg class="abs" style="left:150.8px;top:944.15px" width="14" height="14" viewBox="0 0 14 14"><rect x="0.75" y="0.75" width="12.5" height="12.5" rx="2" fill="#fff" stroke="#b9bdc1" stroke-width="1.5"/><path d="M3.5 7 L10.5 7 M7 3.5 L7 10.5" stroke="#555" stroke-width="1.5"/></svg>
<svg class="abs" style="left:170.8px;top:941.55px" width="25" height="24" viewBox="0 0 25 24"><rect x="0.5" y="6" width="6" height="17" fill="#8cc5de"/><rect x="9.5" y="0.5" width="4.5" height="22.5" fill="#86c1dc"/><path d="M16.5 7.5 L20.5 7.5 L24 22.5 L20 22.5 Z" fill="#8cc5de"/></svg>
<div class="t" style="left:195.8px;top:942.15px;font-size:18px;color:#222">12#<span class="c">基础及下部构造</span></div>
<div class="t" style="left:607.1px;width:96.6px;text-align:center;top:942.15px;font-size:18px;color:#222">13</div>
<div class="t" style="left:710.7px;top:942.15px;font-size:18px;letter-spacing:-0.8px;color:#222">QL-XB12</div>
<div class="t" style="left:839.0px;width:112.7px;text-align:center;top:942.15px;font-size:18px;color:#222"><span class="c">子分部工程</span></div>
<div class="abs" style="left:0;top:970.80px;width:1567px;height:40.45px;border-bottom:1.6px solid #c3d0dd"></div>
<div class="t" style="left:0;width:84.4px;text-align:center;top:982.60px;font-size:18px;color:#222">14</div>
<svg class="abs" style="left:150.8px;top:984.60px" width="14" height="14" viewBox="0 0 14 14"><rect x="0.75" y="0.75" width="12.5" height="12.5" rx="2" fill="#fff" stroke="#b9bdc1" stroke-width="1.5"/><path d="M3.5 7 L10.5 7 M7 3.5 L7 10.5" stroke="#555" stroke-width="1.5"/></svg>
<svg class="abs" style="left:170.8px;top:982.00px" width="25" height="24" viewBox="0 0 25 24"><rect x="0.5" y="6" width="6" height="17" fill="#8cc5de"/><rect x="9.5" y="0.5" width="4.5" height="22.5" fill="#86c1dc"/><path d="M16.5 7.5 L20.5 7.5 L24 22.5 L20 22.5 Z" fill="#8cc5de"/></svg>
<div class="t" style="left:195.8px;top:982.60px;font-size:18px;color:#222">13#<span class="c">基础及下部构造</span></div>
<div class="t" style="left:607.1px;width:96.6px;text-align:center;top:982.60px;font-size:18px;color:#222">14</div>
<div class="t" style="left:710.7px;top:982.60px;font-size:18px;letter-spacing:-0.8px;color:#222">QL-XB13</div>
<div class="t" style="left:839.0px;width:112.7px;text-align:center;top:982.60px;font-size:18px;color:#222"><span class="c">子分部工程</span></div>
<div class="abs" style="left:0;top:1011.25px;width:1567px;height:40.45px;border-bottom:1.6px solid #c3d0dd"></div>
<div class="t" style="left:0;width:84.4px;text-align:center;top:1023.05px;font-size:18px;color:#222">15</div>
<svg class="abs" style="left:150.8px;top:1025.05px" width="14" height="14" viewBox="0 0 14 14"><rect x="0.75" y="0.75" width="12.5" height="12.5" rx="2" fill="#fff" stroke="#b9bdc1" stroke-width="1.5"/><path d="M3.5 7 L10.5 7 M7 3.5 L7 10.5" stroke="#555" stroke-width="1.5"/></svg>
<svg class="abs" style="left:170.8px;top:1022.45px" width="25" height="24" viewBox="0 0 25 24"><rect x="0.5" y="6" width="6" height="17" fill="#8cc5de"/><rect x="9.5" y="0.5" width="4.5" height="22.5" fill="#86c1dc"/><path d="M16.5 7.5 L20.5 7.5 L24 22.5 L20 22.5 Z" fill="#8cc5de"/></svg>
<div class="t" style="left:195.8px;top:1023.05px;font-size:18px;color:#222">14#<span class="c">基础及下部构造</span></div>
<div class="t" style="left:607.1px;width:96.6px;text-align:center;top:1023.05px;font-size:18px;color:#222">15</div>
<div class="t" style="left:710.7px;top:1023.05px;font-size:18px;letter-spacing:-0.8px;color:#222">QL-XB14</div>
<div class="t" style="left:839.0px;width:112.7px;text-align:center;top:1023.05px;font-size:18px;color:#222"><span class="c">子分部工程</span></div>
<div class="abs" style="left:0;top:1051.70px;width:1567px;height:40.45px;border-bottom:1.6px solid #c3d0dd"></div>
<div class="t" style="left:0;width:84.4px;text-align:center;top:1063.50px;font-size:18px;color:#222">16</div>
<svg class="abs" style="left:150.8px;top:1065.50px" width="14" height="14" viewBox="0 0 14 14"><rect x="0.75" y="0.75" width="12.5" height="12.5" rx="2" fill="#fff" stroke="#b9bdc1" stroke-width="1.5"/><path d="M3.5 7 L10.5 7 M7 3.5 L7 10.5" stroke="#555" stroke-width="1.5"/></svg>
<svg class="abs" style="left:170.8px;top:1062.90px" width="25" height="24" viewBox="0 0 25 24"><rect x="0.5" y="6" width="6" height="17" fill="#8cc5de"/><rect x="9.5" y="0.5" width="4.5" height="22.5" fill="#86c1dc"/><path d="M16.5 7.5 L20.5 7.5 L24 22.5 L20 22.5 Z" fill="#8cc5de"/></svg>
<div class="t" style="left:195.8px;top:1063.50px;font-size:18px;color:#222">15#<span class="c">基础及下部构造</span></div>
<div class="t" style="left:607.1px;width:96.6px;text-align:center;top:1063.50px;font-size:18px;color:#222">16</div>
<div class="t" style="left:710.7px;top:1063.50px;font-size:18px;letter-spacing:-0.8px;color:#222">QL-XB15</div>
<div class="t" style="left:839.0px;width:112.7px;text-align:center;top:1063.50px;font-size:18px;color:#222"><span class="c">子分部工程</span></div>
<div class="abs" style="left:0;top:1092.15px;width:1567px;height:40.45px;border-bottom:1.6px solid #c3d0dd"></div>
<div class="t" style="left:0;width:84.4px;text-align:center;top:1103.95px;font-size:18px;color:#222">17</div>
<svg class="abs" style="left:150.8px;top:1105.95px" width="14" height="14" viewBox="0 0 14 14"><rect x="0.75" y="0.75" width="12.5" height="12.5" rx="2" fill="#fff" stroke="#b9bdc1" stroke-width="1.5"/><path d="M3.5 7 L10.5 7 M7 3.5 L7 10.5" stroke="#555" stroke-width="1.5"/></svg>
<svg class="abs" style="left:170.8px;top:1103.35px" width="25" height="24" viewBox="0 0 25 24"><rect x="0.5" y="6" width="6" height="17" fill="#8cc5de"/><rect x="9.5" y="0.5" width="4.5" height="22.5" fill="#86c1dc"/><path d="M16.5 7.5 L20.5 7.5 L24 22.5 L20 22.5 Z" fill="#8cc5de"/></svg>
<div class="t" style="left:195.8px;top:1103.95px;font-size:18px;color:#222">16#<span class="c">基础及下部构造</span></div>
<div class="t" style="left:607.1px;width:96.6px;text-align:center;top:1103.95px;font-size:18px;color:#222">17</div>
<div class="t" style="left:710.7px;top:1103.95px;font-size:18px;letter-spacing:-0.8px;color:#222">QL-XB16</div>
<div class="t" style="left:839.0px;width:112.7px;text-align:center;top:1103.95px;font-size:18px;color:#222"><span class="c">子分部工程</span></div>
<div class="abs" style="left:84.4px;top:0;width:1.5px;height:1200px;background:#bac9d8"></div>
<div class="abs" style="left:607.1px;top:0;width:1.5px;height:1200px;background:#bac9d8"></div>
<div class="abs" style="left:703.7px;top:0;width:1.5px;height:1200px;background:#bac9d8"></div>
<div class="abs" style="left:839.0px;top:0;width:1.5px;height:1200px;background:#bac9d8"></div>
<div class="abs" style="left:951.7px;top:0;width:1.5px;height:1200px;background:#bac9d8"></div>
<div class="abs" style="left:1100.0px;top:0;width:1.5px;height:1200px;background:#bac9d8"></div>
<div class="abs" style="left:1250.4px;top:0;width:1.5px;height:1200px;background:#bac9d8"></div>
<div class="abs" style="left:1377.2px;top:0;width:1.5px;height:1200px;background:#bac9d8"></div>
<div class="abs" style="left:1481.0px;top:0;width:1.5px;height:1200px;background:#bac9d8"></div>
</div>
<div class="abs" style="left:2355px;top:296.7px;width:25px;height:1115.7px;background:#f0f0f0"></div>
<div class="abs" style="left:2358px;top:324px;width:18px;height:791px;background:#c3c3c3"></div>
<svg class="abs" style="left:2359px;top:304px" width="16" height="14" viewBox="0 0 16 14"><path d="M3 10 L8 4 L13 10 Z" fill="#b0b0b0"/></svg>
<svg class="abs" style="left:2359px;top:1390px" width="16" height="14" viewBox="0 0 16 14"><path d="M3 4 L8 10 L13 4 Z" fill="#333"/></svg>
<div class="abs" style="left:788px;top:1412.4px;width:1567px;height:25.6px;background:#f0f0f0"></div>
<div class="abs" style="left:815px;top:1415px;width:1460px;height:19px;background:#c3c3c3"></div>
<svg class="abs" style="left:794px;top:1417px" width="14" height="16" viewBox="0 0 14 16"><path d="M10 3 L4 8 L10 13 Z" fill="#a8a8a8"/></svg>
<svg class="abs" style="left:2335px;top:1417px" width="14" height="16" viewBox="0 0 14 16"><path d="M4 3 L10 8 L4 13 Z" fill="#333"/></svg>
<div class="abs" style="left:2355px;top:1412.4px;width:25px;height:25.6px;background:#dcdcdc"></div>
</body></html>
